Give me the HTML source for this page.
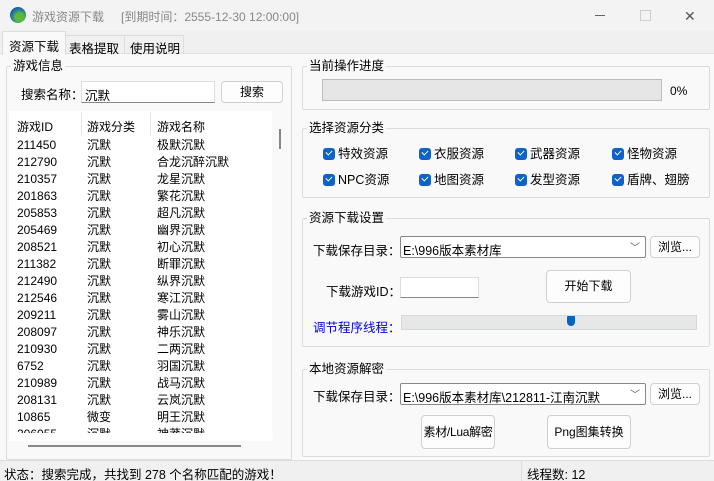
<html><head><style>
html,body{margin:0;width:714px;height:481px;overflow:hidden}
body{background:#f9f9f9;font-family:"Liberation Sans","Noto Sans CJK SC",sans-serif;font-size:12px;color:#000;position:relative;white-space:nowrap}
.a{position:absolute}
.gb{position:absolute;border:1px solid #dcdcdc;border-radius:2px}
.gt{position:absolute;background:#f9f9f9;padding:0 2px;font-size:12.5px;top:-9px;left:4px;line-height:16px}
.btn{position:absolute;background:#fdfdfd;border:1px solid #d0d0d0;border-radius:4px;text-align:center;font-size:12px}
.cb{position:absolute;font-size:12.5px;line-height:14px}
.cb i{display:inline-block;width:12px;height:12px;background:#0e62c9;border-radius:3px;vertical-align:-2px;margin-right:3px;position:relative}
.cb i:after{content:"";position:absolute;left:3px;top:2px;width:5px;height:3px;border-left:1px solid #fff;border-bottom:1px solid #fff;transform:rotate(-45deg)}
.row{position:absolute;left:17px;width:250px;height:17px;line-height:17px;font-size:12px}
.row span{position:absolute;white-space:nowrap}
</style></head><body>
<div class="a" style="left:0;top:0;width:714px;height:31px;background:#f3f3f3"></div>
<div class="a" style="left:10px;top:7px;width:16px;height:16px;border-radius:50%;background:radial-gradient(circle at 60% 65%,#5bb83a 30%,#1f6fb0 60%,#0b3d6e)"></div>
<div class="a" style="left:32px;top:8px;color:#888;font-size:12px">游戏资源下载</div>
<div class="a" style="left:121px;top:8px;color:#888;font-size:12px">[到期时间：2555-12-30 12:00:00]</div>
<div class="a" style="left:595px;top:15px;width:10px;height:1px;background:#666"></div>
<div class="a" style="left:640px;top:10px;width:9px;height:9px;border:1px solid #ccc"></div>
<div class="a" style="left:684px;top:8px;color:#555;font-size:14px">✕</div>
<div class="a" style="left:0;top:31px;width:714px;height:22px;background:#f0f0f0;border-bottom:1px solid #e0e0e0"></div>
<div class="a" style="left:2px;top:31px;width:62px;height:23px;background:#f9f9f9;border:1px solid #ddd;border-bottom:none"></div>
<div class="a" style="left:9px;top:36px;font-size:12.5px">资源下载</div>
<div class="a" style="left:65px;top:35px;width:58px;height:18px;border:1px solid #ddd;border-bottom:none"></div>
<div class="a" style="left:69px;top:38px;font-size:12.5px">表格提取</div>
<div class="a" style="left:124px;top:35px;width:58px;height:18px;border:1px solid #ddd;border-bottom:none"></div>
<div class="a" style="left:130px;top:38px;font-size:12.5px">使用说明</div>

<div class="gb" style="left:6px;top:66px;width:284px;height:392px"><div class="gt">游戏信息</div></div>
<div class="a" style="left:21px;top:84px;font-size:12.5px">搜索名称：</div>
<div class="a" style="left:81px;top:81px;width:132px;height:20px;background:#fff;border:1px solid #ddd;border-bottom:1px solid #888"><span style="position:absolute;left:3px;top:3px;font-size:12.5px">沉默</span></div>
<div class="btn" style="left:221px;top:81px;width:60px;height:20px;line-height:20px">搜索</div>
<div class="a" style="left:9px;top:111px;width:280px;height:330px;background:#fff;overflow:hidden">
<div class="a" style="left:72px;top:2px;width:1px;height:22px;background:#e5e5e5"></div>
<div class="a" style="left:141px;top:2px;width:1px;height:22px;background:#e5e5e5"></div>
<div class="a" style="left:263px;top:0;width:17px;height:330px;background:#f9f9f9"></div>
<div class="a" style="left:270px;top:18px;width:2px;height:20px;background:#888"></div>
<div class="a" style="left:8px;top:7px">游戏ID</div><div class="a" style="left:78px;top:7px">游戏分类</div><div class="a" style="left:148px;top:7px">游戏名称</div>
</div>
<div id="rows"></div>
<div class="a" style="left:9px;top:441px;width:280px;height:16px;background:#f9f9f9"></div>
<div class="a" style="left:28px;top:445px;width:213px;height:2px;background:#888"></div>

<div class="gb" style="left:302px;top:66px;width:406px;height:42px"><div class="gt">当前操作进度</div></div>
<div class="a" style="left:322px;top:79px;width:338px;height:20px;background:#e6e6e6;border:1px solid #bcbcbc"></div>
<div class="a" style="left:670px;top:84px">0%</div>

<div class="gb" style="left:302px;top:128px;width:406px;height:68px"><div class="gt">选择资源分类</div></div>
<div class="cb" style="left:323px;top:147px"><i></i>特效资源</div>
<div class="cb" style="left:419px;top:147px"><i></i>衣服资源</div>
<div class="cb" style="left:515px;top:147px"><i></i>武器资源</div>
<div class="cb" style="left:612px;top:147px"><i></i>怪物资源</div>
<div class="cb" style="left:323px;top:173px"><i></i>NPC资源</div>
<div class="cb" style="left:419px;top:173px"><i></i>地图资源</div>
<div class="cb" style="left:515px;top:173px"><i></i>发型资源</div>
<div class="cb" style="left:612px;top:173px"><i></i>盾牌、翅膀</div>

<div class="gb" style="left:302px;top:218px;width:406px;height:127px"><div class="gt">资源下载设置</div></div>
<div class="a" style="left:313px;top:240px;font-size:12.5px">下载保存目录：</div>
<div class="a" style="left:400px;top:236px;width:244px;height:20px;background:#fff;border:1px solid #888;border-radius:2px"><span style="position:absolute;left:2px;top:3px;font-size:12.5px">E:\996版本素材库</span><span style="position:absolute;right:5px;top:2px;color:#555;font-size:10px">﹀</span></div>
<div class="btn" style="left:650px;top:236px;width:48px;height:20px;line-height:20px">浏览...</div>
<div class="a" style="left:326px;top:281px;font-size:12.5px">下载游戏ID：</div>
<div class="a" style="left:400px;top:277px;width:77px;height:19px;background:#fff;border:1px solid #ddd;border-bottom:1px solid #888"></div>
<div class="btn" style="left:546px;top:270px;width:83px;height:31px;line-height:31px">开始下载</div>
<div class="a" style="left:313px;top:317px;color:#0000e0;font-size:12.5px">调节程序线程：</div>
<div class="a" style="left:401px;top:315px;width:294px;height:13px;background:#e6e8e8;border:1px solid #d8d8d8"></div>
<div class="a" style="left:567px;top:316px;width:8px;height:10px;background:#0063c8;border-radius:1px 1px 4px 4px"></div>

<div class="gb" style="left:302px;top:369px;width:406px;height:86px"><div class="gt">本地资源解密</div></div>
<div class="a" style="left:313px;top:386px;font-size:12.5px">下载保存目录：</div>
<div class="a" style="left:400px;top:383px;width:244px;height:20px;background:#fff;border:1px solid #888;border-radius:2px"><span style="position:absolute;left:2px;top:3px;font-size:12.5px">E:\996版本素材库\212811-江南沉默</span><span style="position:absolute;right:5px;top:2px;color:#555;font-size:10px">﹀</span></div>
<div class="btn" style="left:650px;top:383px;width:48px;height:20px;line-height:20px">浏览...</div>
<div class="btn" style="left:421px;top:415px;width:72px;height:32px;line-height:32px;letter-spacing:-0.3px">素材/Lua解密</div>
<div class="btn" style="left:547px;top:415px;width:82px;height:32px;line-height:32px">Png图集转换</div>

<div class="a" style="left:0;top:460px;width:714px;height:21px;background:#f0f0f0;border-top:1px solid #ddd"></div>
<div class="a" style="left:4px;top:464px;font-size:12.5px">状态：搜索完成，共找到 278 个名称匹配的游戏！</div>
<div class="a" style="left:521px;top:461px;width:1px;height:20px;background:#ddd"></div>
<div class="a" style="left:527px;top:464px;font-size:12.5px">线程数: 12</div>
<script>
var d=[["211450","沉默","极默沉默"],["212790","沉默","合龙沉醉沉默"],["210357","沉默","龙星沉默"],["201863","沉默","繁花沉默"],["205853","沉默","超凡沉默"],["205469","沉默","幽界沉默"],["208521","沉默","初心沉默"],["211382","沉默","断罪沉默"],["212490","沉默","纵界沉默"],["212546","沉默","寒江沉默"],["209211","沉默","雾山沉默"],["208097","沉默","神乐沉默"],["210930","沉默","二两沉默"],["6752","沉默","羽国沉默"],["210989","沉默","战马沉默"],["208131","沉默","云岚沉默"],["10865","微变","明王沉默"],["206055","沉默","神莽沉默"]];
var h="";d.forEach(function(r,i){var t=137+i*17;if(t>433)return;h+='<div class="row" style="top:'+t+'px"><span style="left:0">'+r[0]+'</span><span style="left:70px">'+r[1]+'</span><span style="left:140px">'+r[2]+'</span></div>';});
document.getElementById("rows").innerHTML=h+'<div class="a" style="left:9px;top:433px;width:264px;height:8px;background:#fff"></div>';
</script>
</body></html>
